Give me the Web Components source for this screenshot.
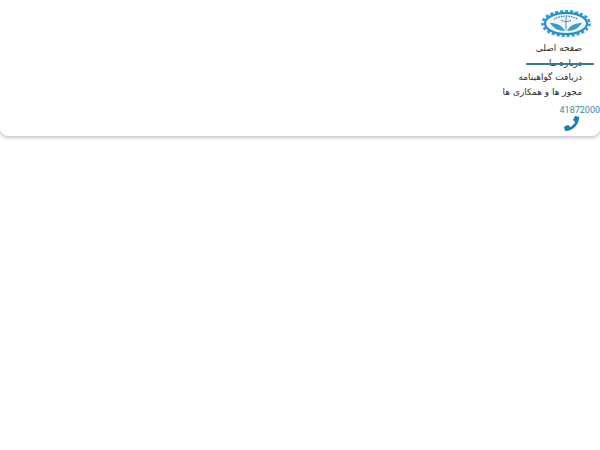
<!DOCTYPE html>
<html lang="fa"><head><meta charset="utf-8"><style>html,body{margin:0;background:#fff;height:100%;min-height:450px}</style></head><body>
<site-page>
<site-header>
<site-logo></site-logo>
<nav-item>صفحه اصلی</nav-item>
<nav-item active>درباره ما</nav-item>
<nav-item>دریافت گواهینامه</nav-item>
<nav-item>مجوز ها و همکاری ها</nav-item>
<phone-link number="41872000"></phone-link>
</site-header>
</site-page>
<script>
function def(name,html,init){customElements.define(name,class extends HTMLElement{constructor(){super();this.attachShadow({mode:'open'}).innerHTML=html}connectedCallback(){if(init)init(this)}})}
def('site-page',`<style>:host{display:block;height:450px;background:#fff;overflow:hidden}</style><slot></slot>`);
def('site-header',`<style>:host{display:flex;flex-direction:column;box-sizing:border-box;height:136px;padding-top:9px;background:#fff;border-radius:0 0 8px 8px;box-shadow:0 1px 4px 0 rgba(0,0,0,.32);font-family:"DejaVu Sans",sans-serif;direction:rtl;align-items:flex-start}</style><slot></slot>`);
def('site-logo',`<style>:host{display:block;width:52px;height:30px;margin-right:8px;margin-bottom:2px}svg{display:block;filter:blur(.35px)}</style>
<svg width="52" height="30" viewBox="0 0 52 30"><ellipse cx="26" cy="14.5" rx="23.5" ry="12.3" fill="none" stroke="#3a9ac8" stroke-width="2.6" stroke-dasharray="3 2"/><ellipse cx="26" cy="14.5" rx="21" ry="10.6" fill="#eef8fc" stroke="#2a8fc2" stroke-width="2.2"/><path d="M10 14c6 0 12 2 15 8-7 0-12-3-15-8zM42 14c-6 0-12 2-15 8 7 0 12-3 15-8z" fill="#3a9bcb"/><path d="M26 8v13M21 11c3 2 7 2 10 0" stroke="#6d9fb6" stroke-width="1.2" fill="none"/><path d="M14 10.500c6-4.500 18-4.500 24 0" stroke="#2a7ea8" stroke-width="1.200" fill="none" stroke-dasharray="1.500 1"/></svg>`);
def('nav-item',`<style>:host{display:block;position:relative;height:14.6px;line-height:15px;font-size:9px;color:#2c2c2c;margin-right:18px;white-space:nowrap}:host([active])::after{content:"";position:absolute;top:7px;right:-12px;width:68px;height:2px;background:#3f7d8e}</style><slot></slot>`);
def('phone-link',`<style>:host{display:flex;flex-direction:column;margin-top:4px;align-self:flex-start}span{font:9px/14px Roboto,sans-serif;color:#3a87ab;direction:ltr}svg{display:block;margin:-1px 21px 0 0}</style><span></span><svg width="15" height="15" viewBox="0 0 512 512"><path fill="#1f7fb2" d="M493 24 389 0c-11-3-23 3-27 14l-48 112c-4 10-1 21 7 28l61 50c-36 76-98 139-175 175l-50-61c-7-8-18-11-28-7L17 359C6 364 0 375 3 386l24 104c2 11 12 19 23 19 256 0 463-207 463-463 0-11-8-21-20-22z"/></svg>`,el=>{el.shadowRoot.querySelector('span').textContent=el.getAttribute('number')});
</script></body></html>
